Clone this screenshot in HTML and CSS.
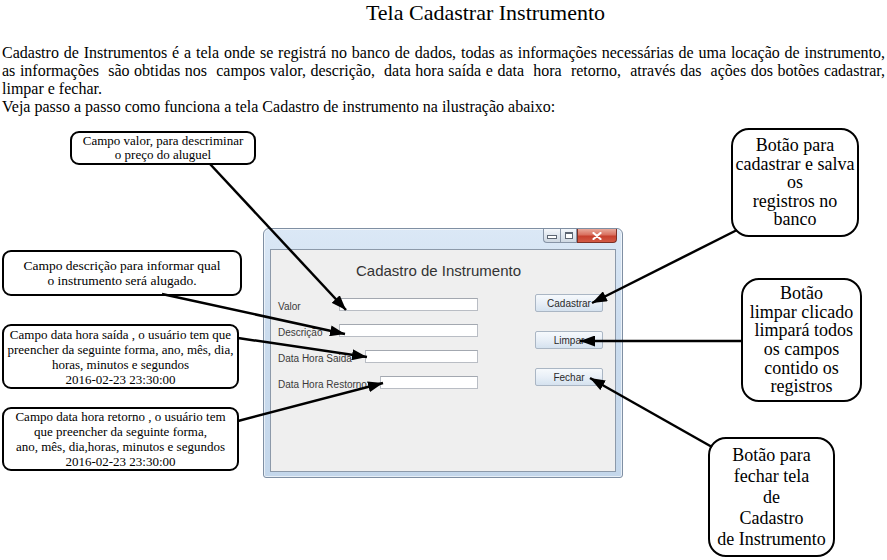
FILE: index.html
```html
<!DOCTYPE html>
<html lang="pt-BR">
<head>
  <meta charset="UTF-8">
  <meta name="viewport" content="width=device-width, initial-scale=1.0">
  <title>Tela Cadastrar Instrumento</title>
  <link rel="stylesheet" href="styles.css">
</head>
<body>
  <h1 class="page-title">Tela Cadastrar Instrumento</h1>

  <p class="intro">
    <span class="intro-line">Cadastro de Instrumentos é a tela onde se registrá no banco de dados, todas as informações necessárias de uma locação de instrumento,</span>
    <span class="intro-line">as informações&nbsp; são obtidas nos&nbsp; campos valor, descrição,&nbsp; data hora saída e data&nbsp; hora&nbsp; retorno,&nbsp; através das&nbsp; ações dos botões cadastrar,</span>
    limpar e fechar.<br>
    Veja passo a passo como funciona a tela Cadastro de instrumento na ilustração abaixo:
  </p>

  <div class="diagram">
    <!-- janela do sistema -->
    <div class="window">
      <div class="titlebar">
        <div class="win-controls">
          <span class="ctl ctl-min"><i></i></span>
          <span class="ctl ctl-max"><i></i></span>
          <span class="ctl ctl-close">
            <svg width="10" height="8" viewBox="0 0 10 8"><path d="M1.5 1 L8.5 7 M8.5 1 L1.5 7" stroke="#fff" stroke-width="2.2" stroke-linecap="round"/></svg>
          </span>
        </div>
      </div>
      <div class="client">
        <h2 class="form-title">Cadastro de Instrumento</h2>
        <div class="form-body">
          <div class="fields">
            <div class="field"><label>Valor</label><input class="text-input in-long" type="text"></div>
            <div class="field"><label>Descrição</label><input class="text-input in-long" type="text"></div>
            <div class="field"><label>Data Hora Saida</label><input class="text-input in-mid" type="text"></div>
            <div class="field"><label>Data Hora Restorno</label><input class="text-input in-short" type="text"></div>
          </div>
          <div class="actions">
            <button class="btn">Cadastrar</button>
            <button class="btn">Limpar</button>
            <button class="btn">Fechar</button>
          </div>
        </div>
      </div>
    </div>

    <!-- balões -->
    <div class="callout c-valor">Campo valor, para descriminar<br>o preço do aluguel</div>
    <div class="callout c-desc">Campo descrição para informar qual<br>o instrumento será alugado.</div>
    <div class="callout c-saida">Campo data hora saída , o usuário tem que<br>preencher da seguinte forma, ano, mês, dia,<br>horas, minutos e segundos<br>2016-02-23 23:30:00</div>
    <div class="callout c-retorno">Campo data hora retorno , o usuário tem<br>que preencher da seguinte forma,<br>ano, mês, dia,horas, minutos e segundos<br>2016-02-23 23:30:00</div>
    <div class="callout callout-lg c-cadastrar">Botão para<br>cadastrar e salva<br>os<br>registros no<br>banco</div>
    <div class="callout callout-lg c-limpar">Botão<br>limpar clicado<br>&nbsp;limpará todos<br>os campos<br>contido os<br>registros</div>
    <div class="callout callout-lg c-fechar">Botão para<br>fechar tela<br>de<br>Cadastro<br>de Instrumento</div>

    <svg class="arrows" width="887" height="445" viewBox="0 115 887 445">
      <defs>
        <marker id="head" markerUnits="userSpaceOnUse" markerWidth="15" markerHeight="11" refX="15" refY="5.5" orient="auto">
          <path d="M0 0 L15 5.5 L0 11 Z" fill="#000"/>
        </marker>
      </defs>
      <g stroke="#000" stroke-width="2.5" marker-end="url(#head)">
        <line x1="210" y1="164" x2="346" y2="310"/>
        <line x1="162" y1="294" x2="345" y2="334"/>
        <line x1="238" y1="338" x2="367" y2="357"/>
        <line x1="238" y1="421" x2="383" y2="383"/>
        <line x1="737" y1="230" x2="592" y2="303"/>
        <line x1="741" y1="341" x2="580" y2="341"/>
        <line x1="712" y1="447" x2="590" y2="378"/>
      </g>
    </svg>
  </div>
</body>
</html>
```

FILE: styles.css
```css
body {
  margin: 0;
  width: 887px;
  font-family: "Liberation Serif", "Times New Roman", serif;
  color: #000;
  background: #fff;
}
.page-title {
  margin: 0;
  padding-left: 84px;
  font-size: 22px;
  line-height: 25px;
  font-weight: normal;
  text-align: center;
}
.intro {
  margin: 19px 2px 0;
  font-size: 16px;
  line-height: 18px;
}
.intro-line {
  display: block;
  text-align: justify;
  text-align-last: justify;
  white-space: nowrap;
}

/* area da ilustracao */
.diagram {
  position: relative;
  height: 444px;
}
.arrows {
  position: absolute;
  left: 0;
  top: -1px;
}

/* janela */
.window {
  position: absolute;
  left: 263px;
  top: 112px;
  width: 360px;
  height: 250px;
  box-sizing: border-box;
  display: flex;
  flex-direction: column;
  padding: 0 6px 5px;
  border: 1px solid #7f8fa3;
  border-radius: 6px 6px 3px 3px;
  background: linear-gradient(180deg, #dbe8f6 0%, #cbdcee 40%, #c4d7eb 100%);
  box-shadow: inset 0 0 0 1px rgba(255, 255, 255, 0.6);
}
.titlebar {
  height: 20px;
  display: flex;
  justify-content: flex-end;
  align-items: flex-start;
}
.win-controls {
  display: flex;
  margin-right: -1px;
}
.ctl {
  height: 14px;
  box-sizing: border-box;
  display: flex;
  align-items: center;
  justify-content: center;
  border: 1px solid #8794a6;
  border-top: none;
}
.ctl-min,
.ctl-max {
  width: 17px;
  background: linear-gradient(180deg, #f4f7fb 0%, #dfe6ee 50%, #cfd8e2 100%);
}
.ctl-min {
  border-radius: 0 0 0 4px;
  border-right: none;
}
.ctl-min i {
  width: 8px;
  height: 2px;
  margin-top: 3px;
  border: 1px solid #5d6673;
  background: #fff;
}
.ctl-max i {
  width: 6px;
  height: 4px;
  border: 1px solid #5d6673;
  border-top-width: 2px;
  background: #fff;
}
.ctl-close {
  width: 40px;
  border-color: #7c3026;
  border-radius: 0 0 4px 0;
  background: linear-gradient(180deg, #e9a99b 0%, #d9705f 45%, #c7402e 55%, #d35a45 100%);
}

.client {
  flex: 1;
  display: flex;
  flex-direction: column;
  border: 1px solid #8c99a9;
  background: #efefef;
}
.form-title {
  margin: 12px 0 0;
  padding-right: 9px;
  font-family: "Liberation Sans", Arial, sans-serif;
  font-size: 15px;
  line-height: 18px;
  font-weight: normal;
  color: #333;
  text-align: center;
}
.form-body {
  display: flex;
  align-items: flex-start;
  margin-top: 14px;
}
.fields {
  width: 200px;
  padding: 4px 0 0 7px;
  display: flex;
  flex-direction: column;
  gap: 13px;
}
.field {
  height: 13px;
  display: flex;
  justify-content: space-between;
  align-items: flex-end;
}
.field label {
  font-family: "Liberation Sans", Arial, sans-serif;
  font-size: 10px;
  line-height: 11px;
  margin-bottom: -1px;
  color: #3a3a3a;
}
.text-input {
  height: 13px;
  box-sizing: border-box;
  margin: 0;
  padding: 0;
  border: 1px solid #b9bdc4;
  border-top-color: #a3a8b0;
  background: #fff;
}
.in-long { width: 139px; }
.in-mid { width: 113px; }
.in-short { width: 98px; }

.actions {
  margin-left: 57px;
  display: flex;
  flex-direction: column;
  gap: 19px;
}
.btn {
  width: 68px;
  height: 18px;
  margin: 0;
  padding: 0;
  box-sizing: border-box;
  border: 1px solid #aab6c4;
  border-radius: 2px;
  background: linear-gradient(180deg, #f6f9fc 0%, #e8eff7 50%, #d5e2ef 100%);
  font-family: "Liberation Sans", Arial, sans-serif;
  font-size: 10px;
  color: #2a2a2a;
}

/* baloes */
.callout {
  position: absolute;
  box-sizing: border-box;
  display: flex;
  align-items: center;
  justify-content: center;
  text-align: center;
  white-space: nowrap;
  border: 2px solid #000;
  border-radius: 9px;
  background: #fff;
  font-size: 13px;
  line-height: 15px;
}
.callout-lg {
  font-size: 18px;
  line-height: 18.6px;
  border-radius: 18px;
}
.c-valor { left: 70px; top: 15px; width: 186px; height: 34px; line-height: 14px; }
.c-desc { left: 2px; top: 134px; width: 240px; height: 46px; font-size: 13.5px; }
.c-saida { left: 2px; top: 208px; width: 237px; height: 65px; }
.c-retorno { left: 2px; top: 291px; width: 237px; height: 64px; }
.c-cadastrar { left: 731px; top: 12px; width: 128px; height: 109px; }
.c-limpar { left: 741px; top: 162px; width: 121px; height: 124px; }
.c-fechar { left: 708px; top: 321px; width: 127px; height: 120px; line-height: 21px; }
```
